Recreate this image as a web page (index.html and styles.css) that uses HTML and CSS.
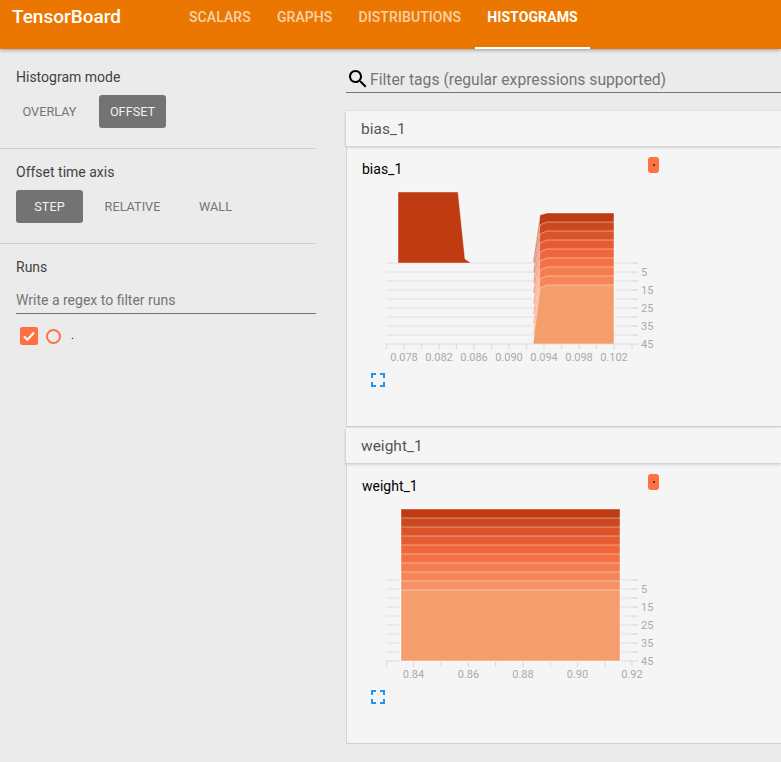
FILE: index.html
```html
<!DOCTYPE html>
<html lang="en">
<head>
<meta charset="utf-8">
<title>TensorBoard</title>
<link rel="stylesheet" href="styles.css">
</head>
<body>
<header class="topbar">
  <div class="brand">TensorBoard</div>
  <nav class="tabs">
    <a class="tab">Scalars</a>
    <a class="tab">Graphs</a>
    <a class="tab">Distributions</a>
    <a class="tab tab-active">Histograms</a>
  </nav>
</header>
<div class="layout">
  <aside class="sidebar">
    <section class="side-section side-first">
      <div class="side-title">Histogram mode</div>
      <div class="btn-row">
        <div class="btn">OVERLAY</div>
        <div class="btn btn-on">OFFSET</div>
      </div>
    </section>
    <section class="side-section">
      <div class="side-title">Offset time axis</div>
      <div class="btn-row">
        <div class="btn btn-on">STEP</div>
        <div class="btn">RELATIVE</div>
        <div class="btn">WALL</div>
      </div>
    </section>
    <section class="side-runs">
      <div class="side-title">Runs</div>
      <input class="run-filter" type="text" placeholder="Write a regex to filter runs">
      <div class="run-row">
        <span class="check">
          <svg viewBox="0 0 18 18" width="18" height="18"><path class="check-mark" d="M4 9.500l3.400 3.200L14 5.600"/></svg>
        </span>
        <span class="radio"></span>
        <span class="run-name">.</span>
      </div>
    </section>
  </aside>
  <main class="main">
    <div class="search">
      <svg class="search-icon" viewBox="0 0 24 24" width="24" height="24"><path d="M15.5 14h-.79l-.28-.27C15.41 12.59 16 11.11 16 9.5 16 5.91 13.09 3 9.5 3S3 5.91 3 9.5 5.91 16 9.5 16c1.61 0 3.09-.59 4.23-1.57l.27.28v.79l5 4.99L20.49 19l-4.99-5zm-6 0C7.01 14 5 11.99 5 9.5S7.01 5 9.5 5 14 7.01 14 9.5 11.99 14 9.5 14z"/></svg>
      <input class="search-input" type="text" placeholder="Filter tags (regular expressions supported)">
    </div>

    <div class="cat-header cat-first">bias_1</div>
    <div class="card">
      <div class="card-head">
        <div class="card-title">bias_1</div>
        <div class="badge"><span class="badge-dot"></span></div>
      </div>
      <svg class="chart" width="300" height="180" viewBox="380 185 300 180">
        <g class="grid">
          <path d="M386 263H638M386 272H638M386 281H638M386 290H638M386 299H638M386 308H638M386 317H638M386 326H638M386 335H638"/>
        </g>
        <path class="axis" d="M386 344H632M386.500 344V349M404 344V349M421.500 344V349M439 344V349M456.500 344V349M474 344V349M491.500 344V349M509 344V349M526.500 344V349M544 344V349M561.500 344V349M579 344V349M596.500 344V349M614 344V349M632 344V349M632 344H638"/>
        <path class="tick" d="M632 263H638M632 272H638M632 281H638M632 290H638M632 299H638M632 308H638M632 317H638M632 326H638M632 335H638"/>
        <polygon class="slice s0" points="398,263 398,192 458,192 465,259 471,263"/>
        <polygon class="slice s0" points="533,263 540,215 547,213 614,213 614,263"/>
        <polygon class="slice s1" points="533,273 540,225 547,222 614,222 614,273"/>
        <polygon class="slice s2" points="533,283 540,234 547,231 614,231 614,283"/>
        <polygon class="slice s3" points="533,293 540,243 547,240 614,240 614,293"/>
        <polygon class="slice s4" points="533,304 540,252 547,249 614,249 614,304"/>
        <polygon class="slice s5" points="533,314 540,261 547,258 614,258 614,314"/>
        <polygon class="slice s6" points="533,324 540,270 547,267 614,267 614,324"/>
        <polygon class="slice s7" points="533,334 540,279 547,276 614,276 614,334"/>
        <polygon class="slice s9" points="533,344 540,288 547,285 614,285 614,344"/>
        <polygon class="slant" points="533,344 533,263 540,215 540,288"/>
        <g class="labels">
          <text x="404" y="361">0.078</text><text x="439" y="361">0.082</text><text x="474" y="361">0.086</text><text x="509" y="361">0.090</text><text x="544" y="361">0.094</text><text x="579" y="361">0.098</text><text x="614" y="361">0.102</text>
        </g>
        <g class="labels-y">
          <text x="641" y="276">5</text><text x="641" y="294">15</text><text x="641" y="312">25</text><text x="641" y="330">35</text><text x="641" y="348">45</text>
        </g>
      </svg>
      <svg class="expand" viewBox="0 0 14 14" width="14" height="14"><path d="M0 5V0H5V2H2V5ZM9 0H14V5H12V2H9ZM14 9V14H9V12H12V9ZM5 14H0V9H2V12H5Z"/></svg>
    </div>

    <div class="cat-header cat-next">weight_1</div>
    <div class="card card-last">
      <div class="card-head">
        <div class="card-title">weight_1</div>
        <div class="badge"><span class="badge-dot"></span></div>
      </div>
      <svg class="chart" width="300" height="180" viewBox="380 502 300 180">
        <g class="grid">
          <path d="M386 580H638M386 589H638M386 598H638M386 607H638M386 616H638M386 625H638M386 634H638M386 643H638M386 652H638"/>
        </g>
        <path class="axis" d="M386 661H632M386.500 661V667M413.500 661V667M441 661V667M468.500 661V667M495.500 661V667M523 661V667M550.500 661V667M577.500 661V667M605 661V667M632 661V667M632 661H638"/>
        <path class="tick" d="M632 580H638M632 589H638M632 598H638M632 607H638M632 616H638M632 625H638M632 634H638M632 643H638M632 652H638"/>
        <rect class="slice s0" x="401" y="509" width="219" height="152"/>
        <rect class="slice s1" x="401" y="518" width="219" height="143"/>
        <rect class="slice s2" x="401" y="527" width="219" height="134"/>
        <rect class="slice s3" x="401" y="536" width="219" height="125"/>
        <rect class="slice s4" x="401" y="545" width="219" height="116"/>
        <rect class="slice s5" x="401" y="554" width="219" height="107"/>
        <rect class="slice s6" x="401" y="563" width="219" height="98"/>
        <rect class="slice s7" x="401" y="572" width="219" height="89"/>
        <rect class="slice s8" x="401" y="581" width="219" height="80"/>
        <rect class="slice s9" x="401" y="590" width="219" height="71"/>
        <g class="labels">
          <text x="413.500" y="678">0.84</text><text x="468.500" y="678">0.86</text><text x="523" y="678">0.88</text><text x="577.500" y="678">0.90</text><text x="632" y="678">0.92</text>
        </g>
        <g class="labels-y">
          <text x="641" y="593">5</text><text x="641" y="611">15</text><text x="641" y="629">25</text><text x="641" y="647">35</text><text x="641" y="665">45</text>
        </g>
      </svg>
      <svg class="expand" viewBox="0 0 14 14" width="14" height="14"><path d="M0 5V0H5V2H2V5ZM9 0H14V5H12V2H9ZM14 9V14H9V12H12V9ZM5 14H0V9H2V12H5Z"/></svg>
    </div>
  </main>
</div>
</body>
</html>
```
FILE: styles.css
```css
* { box-sizing: border-box; }
html, body { margin: 0; height: 762px; overflow: hidden; }
body {
  background: #ebebeb;
  font-family: Roboto, "Liberation Sans", sans-serif;
  color: #424242;
}

.topbar {
  height: 49px;
  background: #ec7700;
  display: flex;
  box-shadow: 0 1px 4px rgba(0, 0, 0, 0.35);
  position: relative;
  z-index: 2;
}
.brand {
  margin-left: 12px;
  width: 165px;
  font-size: 19px;
  font-weight: 500;
  line-height: 34px;
  color: #fff;
}
.tabs { display: flex; gap: 2px; }
.tab {
  height: 49px;
  padding: 0 12px;
  font-size: 14px;
  font-weight: 500;
  line-height: 34px;
  letter-spacing: 0.1px;
  text-transform: uppercase;
  color: rgba(255, 255, 255, 0.68);
}
.tab-active {
  color: #fff;
  font-weight: 700;
  border-bottom: 2px solid #fff;
}

.layout { display: flex; }
.sidebar { width: 316px; flex: none; }
.side-section {
  padding: 13px 0 20px 16px;
  border-bottom: 1px solid #d0d0d0;
}
.side-first { padding-top: 18px; }
.side-title { font-size: 14px; line-height: 20px; color: #424242; }
.btn-row { display: flex; gap: 16px; margin-top: 8px; }
.btn {
  width: 67px;
  height: 33px;
  border-radius: 3px;
  font-size: 12.7px;
  line-height: 33px;
  text-align: center;
  color: #757575;
}
.btn-on { background: #737373; color: #f0f0f0; }

.side-runs { padding: 13px 0 0 16px; }
.run-filter {
  display: block;
  width: 100%;
  height: 27px;
  margin-top: 10px;
  padding: 0;
  background: transparent;
  border: 0;
  border-bottom: 1px solid #757575;
  outline: 0;
  font: 14px Roboto, "Liberation Sans", sans-serif;
  color: #424242;
}
.run-filter::placeholder { color: #757575; opacity: 1; }
.run-row {
  display: flex;
  align-items: center;
  margin: 13px 0 0 4px;
  height: 18px;
}
.check {
  width: 18px;
  height: 18px;
  border-radius: 2px;
  background: #ff7043;
  display: block;
}
.check svg { display: block; }
.check-mark { fill: none; stroke: #fff; stroke-width: 2.2; }
.radio {
  width: 15px;
  height: 15px;
  margin-left: 8px;
  border: 2px solid #ff7043;
  border-radius: 50%;
}
.run-name {
  margin-left: 10px;
  font-size: 11px;
  line-height: 18px;
  color: #000;
}

.main { flex: 1; min-width: 0; padding: 17px 0 0 30px; }
.search {
  display: flex;
  align-items: center;
  height: 27px;
  border-bottom: 1px solid #757575;
}
.search-icon { flex: none; fill: #000; }
.search-input {
  flex: 1;
  height: 26px;
  padding: 0;
  background: transparent;
  border: 0;
  outline: 0;
  font: 15.7px Roboto, "Liberation Sans", sans-serif;
  color: #424242;
}
.search-input::placeholder { color: #757575; opacity: 1; }

.cat-header {
  height: 35px;
  padding-left: 15px;
  background: #f5f5f5;
  font-size: 15.5px;
  line-height: 37px;
  color: #555;
  box-shadow: 0 1px 3px rgba(0, 0, 0, 0.22);
  position: relative;
}
.cat-first { margin-top: 18px; }
.cat-next { margin-top: 1px; }

.card {
  height: 281px;
  background: #f5f5f5;
  border-left: 1px solid #d4d4d4;
  border-bottom: 1px solid #d0d0d0;
}
.card-head {
  display: flex;
  justify-content: space-between;
  width: 297px;
  height: 24px;
  padding: 11px 0 0 15px;
  box-sizing: content-box;
}
.card-title {
  font-size: 14px;
  line-height: 24px;
  color: #000;
}
.badge {
  width: 11px;
  height: 16px;
  border-radius: 3px;
  background: #ff7043;
  display: flex;
  align-items: center;
  justify-content: center;
}
.badge-dot {
  width: 2px;
  height: 2px;
  background: #222;
  border-radius: 50%;
}
.chart {
  display: block;
  margin: 4px 0 0 33px;
}
.grid path { fill: none; stroke: #e8e8e8; stroke-width: 1.5; }
.axis { fill: none; stroke: #dcdcdc; stroke-width: 1.2; }
.tick { fill: none; stroke: #dcdcdc; stroke-width: 1; }
.labels text {
  font-size: 11px;
  fill: #aaa;
  text-anchor: middle;
}
.labels-y text { font-size: 11px; fill: #aaa; }
.slice { stroke: #fff; stroke-opacity: 0.42; stroke-width: 1; }
.slant { fill: #fff; fill-opacity: 0.32; }
.s0 { fill: #bf3c13; }
.s1 { fill: #cc4820; }
.s2 { fill: #da5429; }
.s3 { fill: #e65c32; }
.s4 { fill: #f1673c; }
.s5 { fill: #f57045; }
.s6 { fill: #f57c4f; }
.s7 { fill: #f68659; }
.s8 { fill: #f79064; }
.s9 { fill: #f59d6c; }
.expand {
  display: block;
  margin: 8px 0 0 24px;
  fill: #2196f3;
}
```
